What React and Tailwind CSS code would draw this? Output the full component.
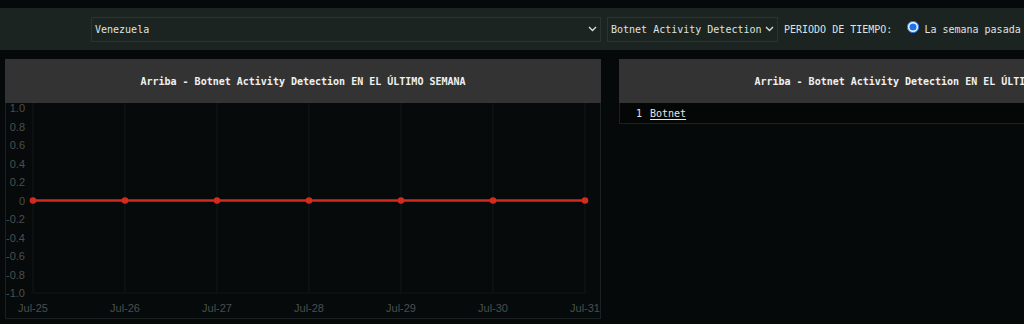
import React from "react";

const mono = { fontFamily: '"DejaVu Sans Mono", "Liberation Mono", monospace' };

function Chevron() {
  return (
    <svg width="9" height="6" viewBox="0 0 9 6" className="shrink-0">
      <path d="M1 1 L4.5 4.5 L8 1" fill="none" stroke="#d8dcda" strokeWidth="1.4" />
    </svg>
  );
}

function Chart() {
  const xs = [27, 119, 211, 303, 395, 487, 579];
  const labels = ["Jul-25", "Jul-26", "Jul-27", "Jul-28", "Jul-29", "Jul-30", "Jul-31"];
  const ticks = ["1.0", "0.8", "0.6", "0.4", "0.2", "0", "-0.2", "-0.4", "-0.6", "-0.8", "-1.0"];
  const yTop = 5;
  const step = 18.5;
  const zeroY = yTop + 5 * step;
  return (
    <svg width="594" height="215" className="block">
      {xs.map((x) => (
        <line key={x} x1={x} x2={x} y1={0} y2={yTop + 10 * step} stroke="#111616" strokeWidth="1" />
      ))}
      <line x1={27} x2={579} y1={yTop + 10 * step} y2={yTop + 10 * step} stroke="#111616" />
      {ticks.map((t, i) => (
        <text
          key={t}
          x={19}
          y={yTop + i * step + 4}
          textAnchor="end"
          fontSize="11"
          fill="#4a4f4e"
          fontFamily='"Liberation Sans", Arial, sans-serif'
        >
          {t}
        </text>
      ))}
      {labels.map((l, i) => (
        <text
          key={l}
          x={xs[i]}
          y={209}
          textAnchor="middle"
          fontSize="11"
          fill="#4a4f4e"
          fontFamily='"Liberation Sans", Arial, sans-serif'
        >
          {l}
        </text>
      ))}
      <line x1={27} x2={579} y1={zeroY} y2={zeroY} stroke="#d42a1f" strokeWidth="2.5" />
      {xs.map((x) => (
        <circle key={"c" + x} cx={x} cy={zeroY} r="3.3" fill="#d42a1f" />
      ))}
    </svg>
  );
}

export default function App() {
  return (
    <div className="w-[1024px] h-[324px] overflow-hidden bg-[#060909]" style={mono}>
      <div className="h-2" />
      <div className="h-[42px] bg-[#1b2420] flex items-center pl-[91px] whitespace-nowrap text-[10px] text-[#dfe3e1]">
        <div className="w-[510px] h-[25px] border border-[#2a332f] flex items-center justify-between pl-[3px] pr-[3px]">
          <span>Venezuela</span>
          <Chevron />
        </div>
        <div className="ml-[6px] w-[171px] h-[25px] border border-[#2a332f] flex items-center justify-between pl-[3px] pr-[3px]">
          <span>Botnet Activity Detection</span>
          <Chevron />
        </div>
        <span className="ml-[6px]">PERIODO DE TIEMPO:</span>
        <input
          type="radio"
          defaultChecked
          className="ml-[15px] w-[12px] h-[12px] m-0 accent-[#1a73e8] relative -top-[2px]"
        />
        <span className="ml-[5px]">La semana pasada</span>
      </div>
      <div className="pt-[9px] pl-[5px] flex gap-[18px]">
        <div className="w-[596px] shrink-0 h-[260px] flex flex-col">
          <div className="h-[44px] bg-[#333333] flex items-center justify-center text-[10px] font-bold text-[#f0f0f0] whitespace-nowrap">
            Arriba - Botnet Activity Detection EN EL ÚLTIMO SEMANA
          </div>
          <div className="flex-1 bg-[#070a0a] border-x border-b border-[#1b2020]">
            <Chart />
          </div>
        </div>
        <div className="w-[596px] shrink-0 flex flex-col">
          <div className="h-[44px] bg-[#333333] flex items-center justify-center text-[10px] font-bold text-[#f0f0f0] whitespace-nowrap">
            Arriba - Botnet Activity Detection EN EL ÚLTIMO SEMANA
          </div>
          <div className="h-[21px] bg-[#050707] border-x border-b border-[#1b2020] flex items-center text-[10px] text-[#e6e6e6]">
            <span className="ml-[16px] w-[14px]">1</span>
            <span className="underline underline-offset-2">Botnet</span>
          </div>
        </div>
      </div>
    </div>
  );
}
